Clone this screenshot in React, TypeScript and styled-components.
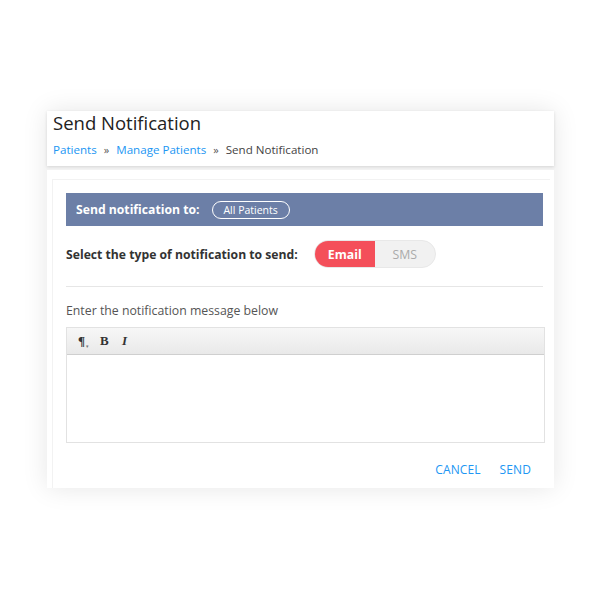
import React from "react";
import styled, { createGlobalStyle } from "styled-components";

const Global = createGlobalStyle`
  html, body { margin: 0; padding: 0; background: #fff; }
  body { font-family: "Open Sans", "Noto Sans", Arial, sans-serif; }
  * { box-sizing: border-box; }
`;

const Page = styled.div`
  width: 600px;
  height: 600px;
  padding: 111px 0 0 47px;
`;

const Frame = styled.div`
  width: 507px;
  display: flex;
  flex-direction: column;
  gap: 4px;
  box-shadow: 0 0 24px rgba(0, 0, 0, 0.1);
  background: #f3f3f3;
`;

const Header = styled.div`
  height: 55px;
  background: #fff;
  padding: 1px 0 0 6px;
  box-shadow: 0 1px 3px rgba(0, 0, 0, 0.12);
`;

const Title = styled.h1`
  margin: 0;
  font-size: 18.5px;
  font-weight: 400;
  color: #222;
  line-height: 22px;
`;

const Crumbs = styled.div`
  margin-top: 8px;
  display: flex;
  align-items: center;
  gap: 7px;
  font-size: 11.6px;
  color: #444;
`;

const Link = styled.a`
  color: #2196f3;
  text-decoration: none;
`;

const Sep = styled.span`
  color: #555;
  font-size: 11px;
`;

const Body = styled.div`
  height: 318px;
  background: #fff;
  padding: 9px 4px 0 5px;
`;

const Panel = styled.div`
  border-top: 1px solid #f2f2f2;
  border-left: 1px solid #f2f2f2;
  padding: 13px 6px 0 13px;
  height: 100%;
`;

const Bar = styled.div`
  width: 477px;
  height: 33px;
  background: #6c7fa7;
  display: flex;
  align-items: center;
  padding-left: 10px;
  gap: 13px;
`;

const BarLabel = styled.span`
  color: #fff;
  font-weight: 700;
  font-size: 12.2px;
`;

const Pill = styled.span`
  border: 1px solid #fff;
  border-radius: 10px;
  color: #fff;
  font-size: 10.5px;
  height: 18px;
  padding: 0 11px 0 10px;
  display: flex;
  align-items: center;
`;

const TypeRow = styled.div`
  display: flex;
  align-items: center;
  margin-top: 14px;
  height: 28px;
  gap: 16px;
`;

const TypeLabel = styled.span`
  font-weight: 700;
  font-size: 12.2px;
  color: #333;
`;

const Toggle = styled.div`
  display: flex;
  height: 28px;
  width: 122px;
  border-radius: 14px;
  overflow: hidden;
  background: #f1f1f1;
  border: 1px solid #e8e8e8;
`;

const ToggleOpt = styled.span<{ $active?: boolean }>`
  flex: 1;
  display: flex;
  align-items: center;
  justify-content: center;
  font-size: 12.3px;
  font-weight: ${(p) => (p.$active ? 700 : 400)};
  color: ${(p) => (p.$active ? "#fff" : "#aaa")};
  background: ${(p) => (p.$active ? "#f44f5a" : "transparent")};
`;

const Divider = styled.div`
  width: 477px;
  height: 1px;
  background: #e6e6e6;
  margin-top: 18px;
`;

const Prompt = styled.div`
  margin-top: 15px;
  font-size: 12.3px;
  color: #555;
`;

const Editor = styled.div`
  margin-top: 8px;
  width: 479px;
  height: 116px;
  border: 1px solid #e2e2e2;
  display: flex;
  flex-direction: column;
`;

const Toolbar = styled.div`
  height: 27px;
  background: linear-gradient(#f7f7f7, #e9e9e9);
  border-bottom: 1px solid #cfcfcf;
  display: flex;
  align-items: center;
  padding-left: 11px;
  gap: 13px;
`;

const Tool = styled.span<{ $italic?: boolean }>`
  font-family: "Liberation Serif", "DejaVu Serif", serif;
  font-weight: 700;
  font-style: ${(p) => (p.$italic ? "italic" : "normal")};
  font-size: 13px;
  color: #333;
  width: 9px;
  position: relative;
`;

const Caret = styled.span`
  position: absolute;
  left: 8px;
  top: 10px;
  font-size: 5px;
  color: #777;
`;

const Area = styled.div`
  flex: 1;
  background: #fff;
`;

const Actions = styled.div`
  display: flex;
  justify-content: flex-end;
  gap: 19px;
  margin-top: 18px;
  padding-right: 13px;
`;

const Action = styled.button`
  background: none;
  border: none;
  padding: 0;
  color: #2196f3;
  font-family: inherit;
  font-size: 12px;
  letter-spacing: 0.1px;
`;

export default function App() {
  return (
    <>
      <Global />
      <Page>
        <Frame>
          <Header>
            <Title>Send Notification</Title>
            <Crumbs>
              <Link>Patients</Link>
              <Sep>»</Sep>
              <Link>Manage Patients</Link>
              <Sep>»</Sep>
              <span>Send Notification</span>
            </Crumbs>
          </Header>
          <Body>
            <Panel>
              <Bar>
                <BarLabel>Send notification to:</BarLabel>
                <Pill>All Patients</Pill>
              </Bar>
              <TypeRow>
                <TypeLabel>Select the type of notification to send:</TypeLabel>
                <Toggle>
                  <ToggleOpt $active>Email</ToggleOpt>
                  <ToggleOpt>SMS</ToggleOpt>
                </Toggle>
              </TypeRow>
              <Divider />
              <Prompt>Enter the notification message below</Prompt>
              <Editor>
                <Toolbar>
                  <Tool>
                    ¶<Caret>▾</Caret>
                  </Tool>
                  <Tool>B</Tool>
                  <Tool $italic>I</Tool>
                </Toolbar>
                <Area />
              </Editor>
              <Actions>
                <Action>CANCEL</Action>
                <Action>SEND</Action>
              </Actions>
            </Panel>
          </Body>
        </Frame>
      </Page>
    </>
  );
}
